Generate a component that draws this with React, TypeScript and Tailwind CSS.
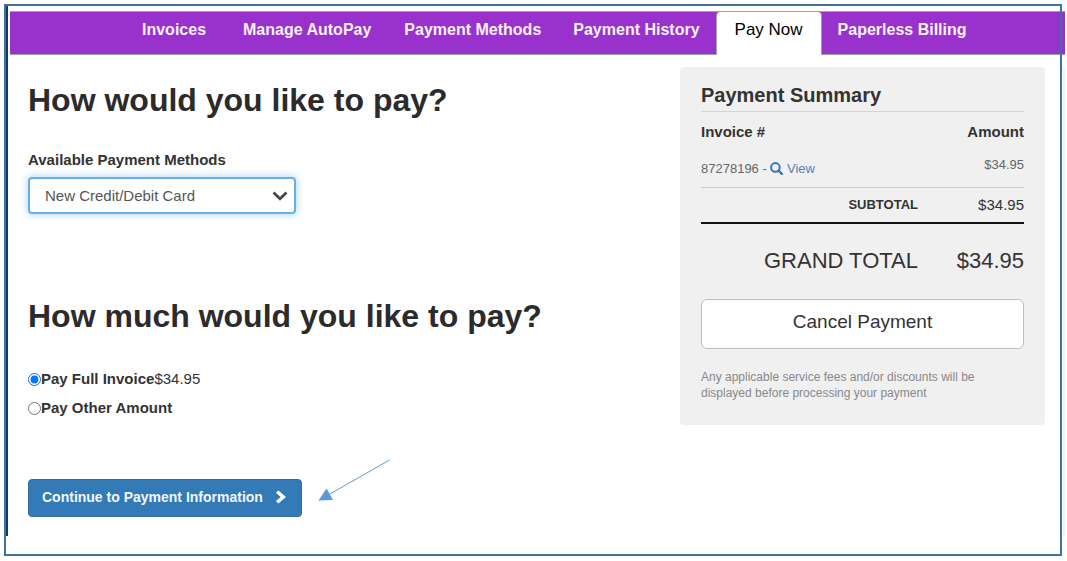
import { useState } from 'react';

interface Tab {
  label: string;
  className?: string;
}

const tabs: Tab[] = [
  { label: 'Invoices', className: 'px-5' },
  { label: 'Manage AutoPay', className: 'px-[17px]' },
  { label: 'Payment Methods' },
  { label: 'Payment History' },
  { label: 'Pay Now' },
  { label: 'Paperless Billing' },
];

const invoice = { id: '87278196', amount: '$34.95' };

function SearchIcon() {
  return (
    <svg className="inline-block h-[13px] w-[13px] align-[-2px]" viewBox="0 0 13 13" aria-hidden="true">
      <circle cx="5.4" cy="5.4" r="4.3" fill="none" stroke="#337ab7" strokeWidth="2" />
      <path d="M8.6 8.6 L11.8 11.8" stroke="#337ab7" strokeWidth="2.4" strokeLinecap="round" />
    </svg>
  );
}

function ChevronRight() {
  return (
    <svg className="h-[14px] w-3" viewBox="0 0 12 14" aria-hidden="true">
      <path d="M3.4 0.4 L11 6.9 L3.4 13.4 L0.9 11.1 L5.7 6.9 L0.9 2.7 Z" fill="#fff" />
    </svg>
  );
}

function NavTabs() {
  const active = 'Pay Now';

  return (
    <nav className="border-y border-[#a3a0a6] bg-[#9932cc]">
      <ul className="ml-28 flex">
        {tabs.map((tab) => (
          <li key={tab.label} className="flex">
            {tab.label === active ? (
              <a
                href="#pay-now"
                aria-current="page"
                className="-mb-px rounded-t border-x border-[#a3a0a6] bg-white px-[18px] pt-1.5 pb-3 text-[17px] leading-6 whitespace-nowrap text-black"
              >
                {tab.label}
              </a>
            ) : (
              <a
                href="#tab"
                className={`${tab.className || 'px-4'} pt-1.5 pb-3 text-base leading-6 font-bold whitespace-nowrap text-[#f8f2fc]`}
              >
                {tab.label}
              </a>
            )}
          </li>
        ))}
      </ul>
    </nav>
  );
}

function PaymentSummary() {
  return (
    <aside className="rounded bg-[#f0f0f0] px-[21px] pt-4 pb-6">
      <h2 className="border-b border-[#d5d5d5] pb-1 text-xl leading-6 font-bold text-[#333]">Payment Summary</h2>
      <table className="w-full table-fixed">
        <thead>
          <tr className="h-[39px] text-[15px] leading-5 text-[#333]">
            <th className="text-left font-bold">Invoice #</th>
            <th className="w-[106px] text-right font-bold">Amount</th>
          </tr>
        </thead>
        <tbody className="text-[#333]">
          <tr className="h-9 border-b border-[#ccc] text-[13px] leading-5 text-[#666]">
            <td>
              {invoice.id} -{' '}
              <a href="#view" className="text-[#5580b5]">
                <SearchIcon /> View
              </a>
            </td>
            <td className="pt-1 text-right align-top">{invoice.amount}</td>
          </tr>
          <tr className="h-9 border-b-2 border-[#111]">
            <td className="text-right text-[13px] leading-5 font-bold">SUBTOTAL</td>
            <td className="text-right text-[15px] leading-5">{invoice.amount}</td>
          </tr>
          <tr className="h-[75px] text-[22px] leading-7">
            <td className="text-right">GRAND TOTAL</td>
            <td className="text-right">{invoice.amount}</td>
          </tr>
        </tbody>
      </table>
      <button
        type="button"
        className="mt-px h-[50px] w-full rounded-md border border-[#bdbdbd] bg-white pb-1 text-[19px] leading-6 text-[#333]"
      >
        Cancel Payment
      </button>
      <p className="mt-5 pr-8 text-xs leading-4 text-[#888]">
        Any applicable service fees and/or discounts will be displayed before processing your payment
      </p>
    </aside>
  );
}

function PaymentForm() {
  const [method, setMethod] = useState('new-card');
  const [amountType, setAmountType] = useState('full');

  return (
    <form className="pt-[13px]" onSubmit={(event) => event.preventDefault()}>
      <h1 className="text-[32px] leading-10 font-bold text-[#2b2b2b]">How would you like to pay?</h1>

      <label htmlFor="method" className="mt-[30px] block text-[15px] leading-5 font-bold text-[#333]">
        Available Payment Methods
      </label>
      <div className="relative mt-[7px] w-[268px]">
        <select
          id="method"
          value={method}
          onChange={(event) => setMethod(event.target.value)}
          className="h-[37px] w-full appearance-none rounded border-2 border-[#66afe9] bg-white pt-0.5 pl-[15px] text-[15px] text-[#555] shadow-[0_0_8px_rgba(102,175,233,0.6)] outline-none"
        >
          <option value="new-card">New Credit/Debit Card</option>
        </select>
        <svg
          className="pointer-events-none absolute top-[14px] right-2 h-[10px] w-4"
          viewBox="0 0 16 10"
          aria-hidden="true"
        >
          <path d="M1.5 1.5 L8 7.8 L14.5 1.5" fill="none" stroke="#484848" strokeWidth="2.8" />
        </svg>
      </div>

      <h1 className="mt-[82px] text-[32px] leading-10 font-bold text-[#2b2b2b]">How much would you like to pay?</h1>

      <div className="mt-[33px] flex flex-col gap-[9px] text-[15px] leading-5 text-[#333]">
        <label className="flex items-center">
          <input
            type="radio"
            name="amount"
            className="h-[13px] w-[13px]"
            checked={amountType === 'full'}
            onChange={() => setAmountType('full')}
          />
          <span className="font-bold">Pay Full Invoice</span>
          <span>{invoice.amount}</span>
        </label>
        <label className="flex items-center">
          <input
            type="radio"
            name="amount"
            className="h-[13px] w-[13px]"
            checked={amountType === 'other'}
            onChange={() => setAmountType('other')}
          />
          <span className="font-bold">Pay Other Amount</span>
        </label>
      </div>

      <div className="mt-[41px] flex items-end gap-4">
        <button
          type="submit"
          className="flex h-[38px] items-center gap-3 rounded border border-[#2e6da4] bg-[#337ab7] pr-3.5 pb-0.5 pl-[13px] text-sm font-bold whitespace-nowrap text-[#f2f7fb]"
        >
          Continue to Payment Information
          <ChevronRight />
        </button>
        <svg className="mb-4 h-[42px] w-[72px]" viewBox="0 0 72 42" aria-hidden="true">
          <path d="M71.5 1 L12 35" fill="none" stroke="#5b9bd5" strokeWidth="1" />
          <path d="M0.5 41.5 L8.5 29.5 L15 41 Z" fill="#5b9bd5" />
        </svg>
      </div>
    </form>
  );
}

export default function App() {
  return (
    <div className="relative bg-white pt-[5px] pr-0.5 pb-[25px] pl-1.5 font-['Liberation_Sans',Arial,sans-serif]">
      <div className="border-l-2 border-[#0b3a6b] pt-1.5 pl-0.5">
        <NavTabs />
        <div className="grid grid-cols-[minmax(0,1fr)_365px_18px_2px] pt-3 pl-[18px]">
          <PaymentForm />
          <div className="pb-[111px]">
            <PaymentSummary />
          </div>
          <div />
          <div className="bg-[#f2f2f2]" />
        </div>
      </div>

      {/* outer frame drawn on top of the page */}
      <div className="pointer-events-none absolute top-1 right-[5px] bottom-[5px] left-1 border-2 border-[#41719c]" />
    </div>
  );
}
